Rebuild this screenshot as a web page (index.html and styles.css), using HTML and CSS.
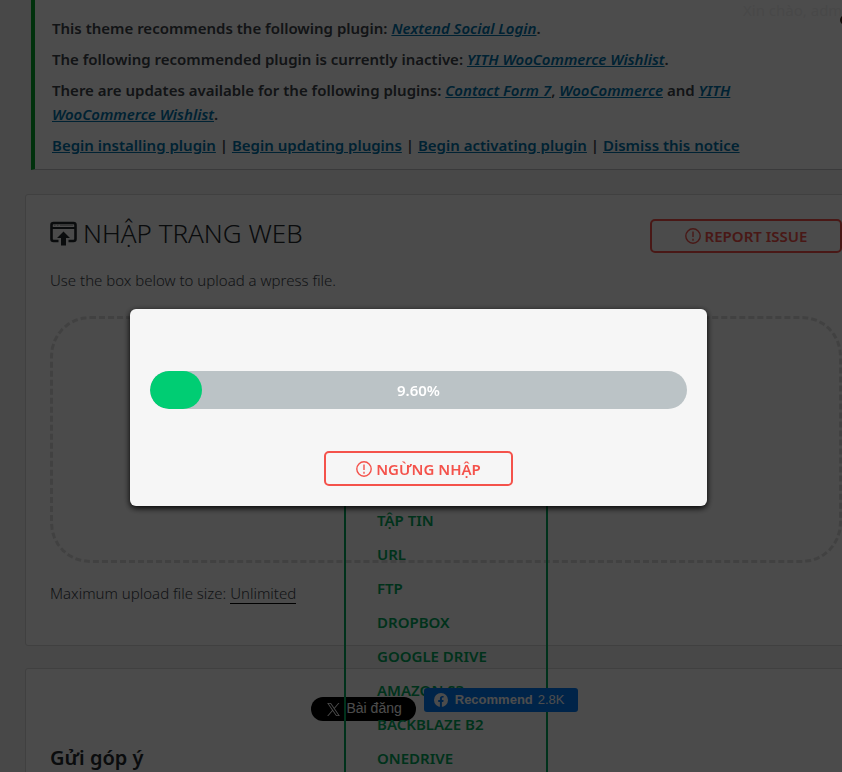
FILE: index.html
```html
<!DOCTYPE html>
<html lang="vi">
<head>
<meta charset="utf-8">
<title>Nhập trang web</title>
<link rel="stylesheet" href="styles.css">
</head>
<body>
<div class="page">
  <div class="account"><span>Xin chào, admin</span><i class="avatar"></i></div>
  <section class="notice">
    <p>This theme recommends the following plugin: <a href="#"><em>Nextend Social Login</em></a>.</p>
    <p>The following recommended plugin is currently inactive: <a href="#"><em>YITH WooCommerce Wishlist</em></a>.</p>
    <p>There are updates available for the following plugins: <a href="#"><em>Contact Form 7</em></a>, <a href="#"><em>WooCommerce</em></a> and <a href="#"><em>YITH<br>WooCommerce Wishlist</em></a>.</p>
    <p><a href="#">Begin installing plugin</a> | <a href="#">Begin updating plugins</a> | <a href="#">Begin activating plugin</a> | <a href="#">Dismiss this notice</a></p>
  </section>

  <main class="card">
    <header class="card-head">
      <h1>
        <svg width="27" height="25" viewBox="0 0 27 25" fill="none" stroke="currentColor"><path d="M8.500 20H3.500Q1.500 20 1.500 18V4Q1.500 2 3.500 2h20q2 0 2 2v14q0 2-2 2h-5" stroke-width="2.600"/><path d="M2 7h23" stroke-width="2"/><path d="M13.500 10.500l6.500 6.500h-4v7.500h-5V17H7z" fill="currentColor" stroke="none"/><path d="M4 4.200h1.500M7 4.200h1.500M10 4.200h13" stroke="#999" stroke-width="1"/></svg>
        <span>NHẬP TRANG WEB</span>
      </h1>
      <button class="btn report" type="button"><svg class="alert" viewBox="0 0 16 16"><circle cx="8" cy="8" r="7.200"/><path d="M8 3.500v5.500M8 10.800v1.900"/></svg>REPORT ISSUE</button>
    </header>
    <p class="lead">Use the box below to upload a wpress file.</p>
    <div class="dropzone">
      <ul class="sources">
        <li><a href="#">TẬP TIN</a></li>
        <li><a href="#">URL</a></li>
        <li><a href="#">FTP</a></li>
        <li><a href="#">DROPBOX</a></li>
        <li><a href="#">GOOGLE DRIVE</a></li>
        <li><a href="#">AMAZON S3</a></li>
        <li><a href="#">BACKBLAZE B2</a></li>
        <li><a href="#">ONEDRIVE</a></li>
      </ul>
    </div>
    <p class="limit">Maximum upload file size: <a href="#">Unlimited</a></p>
  </main>

  <aside class="card feedback">
    <div class="social">
      <a class="post" href="#"><svg width="13" height="13" viewBox="0 0 24 24" fill="currentColor"><path fill-rule="evenodd" d="M14.300 10.200 23 0h-2.100l-7.500 8.800L7.300 0H.3l9.100 13.300L.3 24h2.100l8-9.300 6.400 9.300h7zM11.400 13.500l-.9-1.300L3.100 1.600h3.200l6 8.500.9 1.300 7.700 11.100h-3.200z"/></svg><span>Bài đăng</span></a>
      <a class="recommend" href="#"><svg width="14" height="14" viewBox="0 0 14 14"><circle cx="7" cy="7" r="7" fill="#fff"/><path d="M5.900 14V9.100H4.200V7h1.700V5.600c0-1.800 1-2.700 2.500-2.700.6 0 1.200.1 1.200.1v1.600h-.7c-.8 0-1 .5-1 1V7h1.700l-.3 2.100H7.900V14z" fill="#0078f5"/></svg><b>Recommend</b><span>2.8K</span></a>
    </div>
    <h2>Gửi góp ý</h2>
  </aside>
</div>

<div class="overlay">
  <div class="modal" role="dialog" aria-label="Nhập">
    <div class="progress"><div class="fill" style="width:9.6%"></div><span>9.60%</span></div>
    <button class="btn stop" type="button"><svg class="alert" viewBox="0 0 16 16"><circle cx="8" cy="8" r="7.200"/><path d="M8 3.500v5.500M8 10.800v1.900"/></svg>NGỪNG NHẬP</button>
  </div>
</div>
</body>
</html>
```
FILE: styles.css
```css
* { box-sizing: border-box; }

body {
  margin: 0;
  height: 100vh;
  overflow: hidden;
  background: #f0f0f1;
  color: #3c434a;
  font: 15px/24px "Noto Sans", sans-serif;
}

h1, h2, p, ul { margin: 0; padding: 0; }

.page {
  position: relative;
  height: 100vh;
  overflow: hidden;
}

.account {
  position: absolute;
  top: 0;
  left: calc(100% - 99px);
  line-height: 20px;
  white-space: nowrap;
  color: #f0f0f1;
}

.avatar {
  position: absolute;
  top: 15px;
  left: 97px;
  width: 10px;
  height: 10px;
  border-radius: 50%;
  background: #3c2a20;
}

.notice {
  display: flex;
  flex-direction: column;
  gap: 7px;
  margin-left: 31px;
  padding: 16px 0 12px 17px;
  border-left: 4px solid #00a32a;
  border-bottom: 1px solid #c3c4c7;
  background: #fff;
  font-weight: 600;
  white-space: nowrap;
}

.notice a { color: #0073aa; }

.card {
  margin: 24px -25px 0 25px;
  padding: 24px 24px 39px;
  border: 1px solid #d6d6d6;
  border-radius: 3px;
  background: #fafafa;
}

.card-head {
  display: flex;
  align-items: flex-start;
  justify-content: space-between;
  height: 34px;
}

h1 {
  display: flex;
  gap: 6px;
  align-items: center;
  color: #23282d;
  font-size: 26px;
  font-weight: 300;
  line-height: 28px;
}

.btn {
  display: flex;
  align-items: center;
  justify-content: center;
  gap: 4px;
  height: 34px;
  padding: 0;
  border: 2px solid #f4524b;
  border-radius: 5px;
  background: transparent;
  color: #f4524b;
  font: 600 15px/20px "Noto Sans", sans-serif;
}

.report { width: 192px; }

.alert {
  width: 16px;
  height: 16px;
  fill: none;
  stroke: currentColor;
  stroke-width: 1.4;
}

.lead { margin-top: 15px; font-weight: 350; }

.dropzone {
  position: relative;
  height: 247px;
  margin-top: 24px;
  border: 3px dashed #d9d9d9;
  border-radius: 40px;
}

.sources {
  position: absolute;
  top: 148px;
  left: 50%;
  width: 204px;
  margin-left: -102px;
  padding: 34px 31px 60px;
  border: 2px solid #00a75d;
  list-style: none;
}

.sources a {
  display: block;
  line-height: 34px;
  color: #00a75d;
  font-weight: 600;
  text-decoration: none;
  white-space: nowrap;
}

.limit { margin-top: 18px; padding-bottom: 1px; font-weight: 350; }
.limit a { color: inherit; text-decoration: none; border-bottom: 1px solid #000; }

.feedback { margin-top: 22px; padding-top: 19px; }

.social {
  display: flex;
  justify-content: center;
  gap: 8px;
  height: 33px;
  padding-right: 3px;
  font-family: "Liberation Sans", sans-serif;
}

.social a {
  display: flex;
  align-items: center;
  height: 24px;
  color: #fff;
  text-decoration: none;
}

.post {
  align-self: flex-end;
  gap: 6px;
  padding: 0 14px 0 16px;
  border-radius: 12px;
  background: #000;
  font-size: 14px;
}

.post span { padding-bottom: 3px; }

.recommend {
  position: relative;
  z-index: 1;
  gap: 5px;
  padding: 0 13px 0 10px;
  border-radius: 3px;
  background: #0078f5;
  font-size: 13px;
}

.recommend svg { margin-right: 2px; }

h2 {
  margin-top: 25px;
  color: #23282d;
  font-size: 20px;
  font-weight: 600;
  line-height: 24px;
}

.overlay {
  position: fixed;
  inset: 0;
  z-index: 10;
  display: flex;
  align-items: center;
  justify-content: center;
  padding: 43px 5px 0 0;
  background: rgba(0, 0, 0, .7);
}

.modal {
  display: flex;
  flex-direction: column;
  align-items: center;
  gap: 42px;
  width: 577px;
  padding: 62px 20px 20px;
  border-radius: 6px;
  background: #f6f6f6;
  box-shadow: 0 2px 6px #000;
}

.progress {
  position: relative;
  display: flex;
  align-items: center;
  justify-content: center;
  width: 100%;
  height: 38px;
  overflow: hidden;
  border-radius: 19px;
  background: #bbc3c6;
  color: #fff;
  font-weight: 600;
}

.fill {
  position: absolute;
  inset: 0 auto 0 0;
  border-radius: 19px;
  background: #00cd73;
}

.stop { width: 189px; height: 35px; }
```
